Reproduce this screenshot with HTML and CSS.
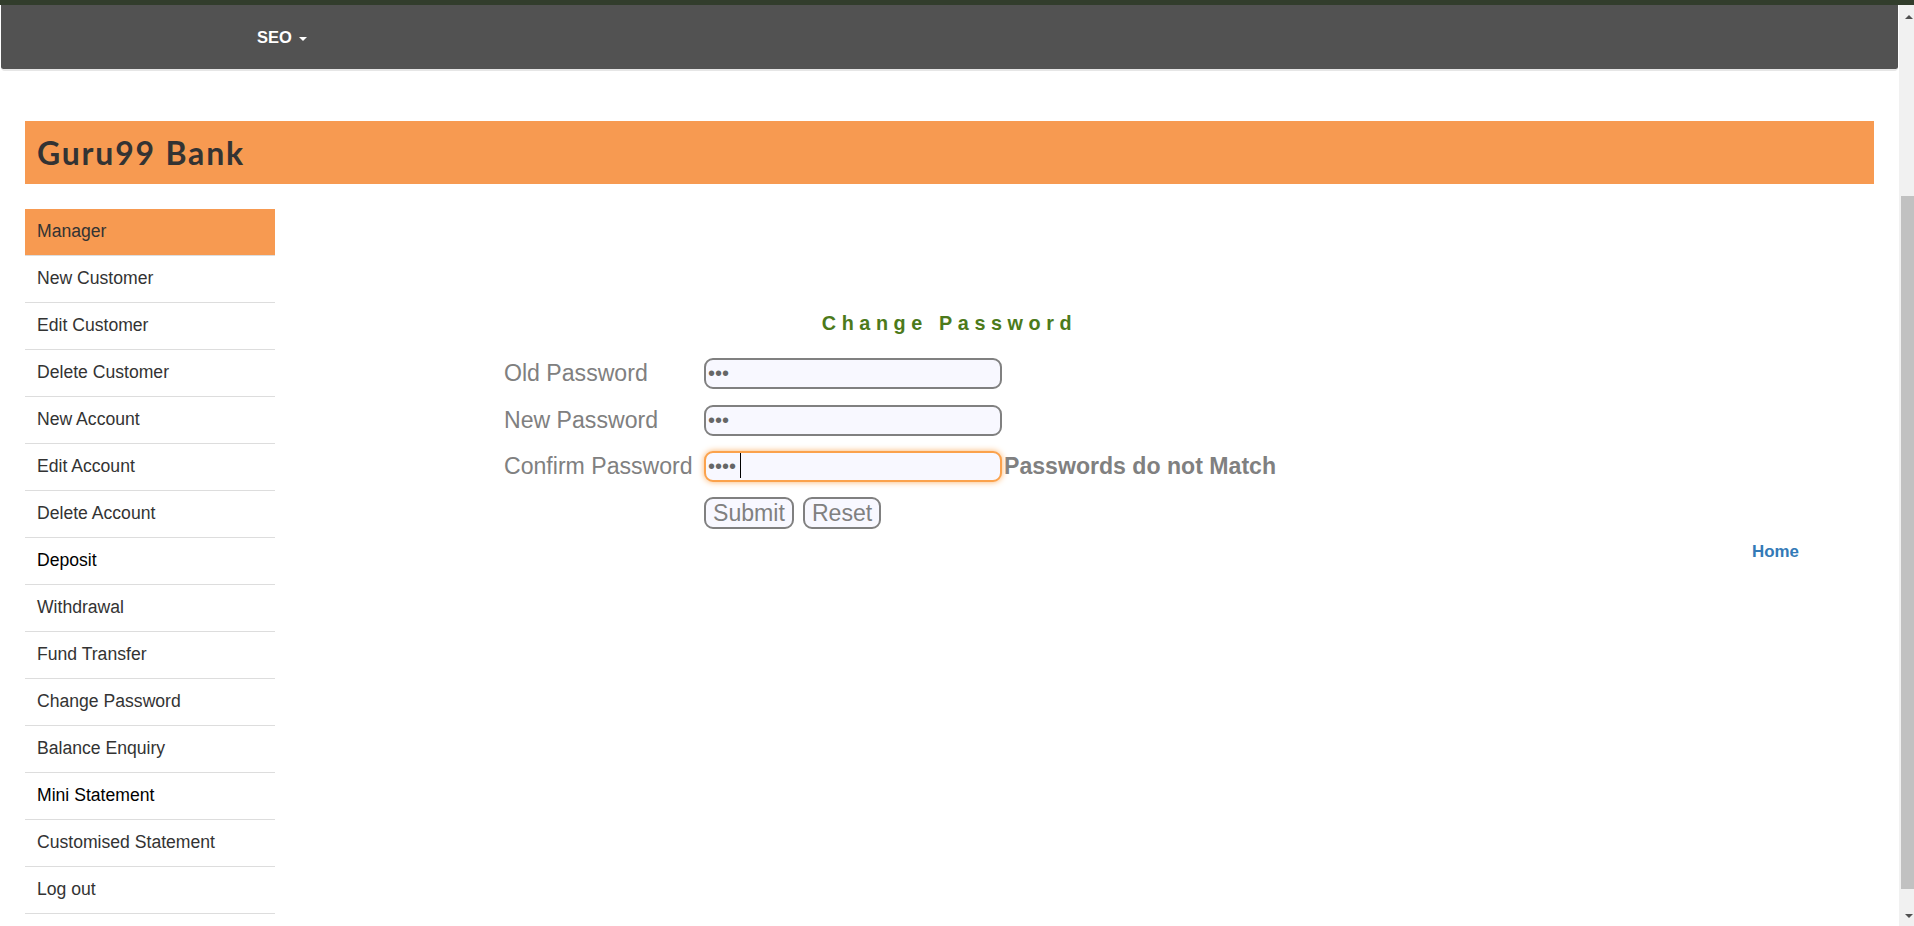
FILE: index.html
```html
<!DOCTYPE html>
<html lang="en">
<head>
<meta charset="utf-8">
<title>Guru99 Bank - Change Password</title>
<link rel="stylesheet" href="styles.css">
</head>
<body>
<div class="topband"></div>
<div class="window">
  <div class="page">
    <nav class="navbar">
      <a class="nav-item" href="#">SEO <span class="nav-caret"></span></a>
    </nav>
    <div class="container">
      <header class="brand">Guru99 Bank</header>
      <div class="layout">
        <ul class="sidebar">
          <li class="menu-head">Manager</li>
          <li><a href="#">New Customer</a></li>
          <li><a href="#">Edit Customer</a></li>
          <li><a href="#">Delete Customer</a></li>
          <li><a href="#">New Account</a></li>
          <li><a href="#">Edit Account</a></li>
          <li><a href="#">Delete Account</a></li>
          <li><a class="dark" href="#">Deposit</a></li>
          <li><a href="#">Withdrawal</a></li>
          <li><a href="#">Fund Transfer</a></li>
          <li><a href="#">Change Password</a></li>
          <li><a href="#">Balance Enquiry</a></li>
          <li><a class="dark" href="#">Mini Statement</a></li>
          <li><a href="#">Customised Statement</a></li>
          <li><a href="#">Log out</a></li>
        </ul>
        <main class="content">
          <form class="pw-form">
            <h3 class="heading">Change Password</h3>
            <div class="grid">
              <label class="lbl">Old Password</label>
              <div class="field"><input class="pw" type="password" value="abc"></div>
              <label class="lbl">New Password</label>
              <div class="field"><input class="pw" type="password" value="abc"></div>
              <label class="lbl">Confirm Password</label>
              <div class="field">
                <span class="input-wrap"><input class="pw focused" type="password" value="abcd"><span class="caret"></span></span><span class="mismatch">Passwords do not Match</span>
              </div>
              <span class="lbl"></span>
              <div class="buttons">
                <button class="btn" type="button">Submit</button>
                <button class="btn" type="button">Reset</button>
              </div>
            </div>
          </form>
          <div class="home-row"><a class="home" href="#">Home</a></div>
        </main>
      </div>
    </div>
  </div>
  <div class="scrollbar">
    <div class="sb-btn sb-up"><span class="arrow-up"></span></div>
    <div class="sb-track"><div class="sb-thumb"></div></div>
    <div class="sb-btn sb-down"><span class="arrow-down"></span></div>
  </div>
</div>
</body>
</html>
```

FILE: styles.css
```css
* { box-sizing: border-box; }

html, body {
  margin: 0;
  padding: 0;
  height: 926px;
  overflow: hidden;
  background: #ffffff;
  font-family: "Liberation Sans", Arial, sans-serif;
}

.topband {
  height: 5px;
  background: #323d2c;
}

.window {
  display: flex;
  height: 921px;
}

.page {
  flex: 1;
  min-width: 0;
  overflow: hidden;
}

/* navbar */
.navbar {
  margin: 0 1px;
  height: 66px;
  background: #525252;
  border-bottom: 2px solid #e6e6e6;
  border-radius: 0 0 4px 4px;
  display: flex;
  align-items: center;
  padding-left: 256px;
  padding-top: 1px;
}

.nav-item {
  color: #ffffff;
  font-weight: bold;
  font-size: 16.5px;
  text-decoration: none;
  display: flex;
  align-items: center;
}

.nav-caret {
  display: inline-block;
  width: 0;
  height: 0;
  margin-left: 7px;
  margin-top: 2px;
  border-left: 4px solid transparent;
  border-right: 4px solid transparent;
  border-top: 4px solid #ffffff;
}

/* container */
.container {
  padding: 50px 25px 0 25px;
}

.brand {
  height: 63px;
  background: #f79a51;
  color: #333333;
  font-family: "Lato", "Open Sans", sans-serif;
  font-weight: 700;
  font-size: 32px;
  letter-spacing: 1.8px;
  display: flex;
  align-items: center;
  padding-left: 12px;
  padding-bottom: 1px;
}

.layout {
  display: flex;
  margin-top: 25px;
}

/* sidebar */
.sidebar {
  list-style: none;
  margin: 0;
  padding: 0;
  width: 250px;
  flex: none;
}

.sidebar li {
  border-bottom: 1px solid #dddddd;
  font-size: 17.6px;
  line-height: 25px;
}

.sidebar li a,
.menu-head {
  display: block;
  padding: 10px 12px 11px;
  color: #333333;
  text-decoration: none;
}

.sidebar li a.dark {
  color: #000000;
}

.menu-head {
  background: #f79a51;
}

/* content */
.content {
  flex: 1;
  min-width: 0;
}

.pw-form {
  margin-left: 228px;
  width: 893px;
  padding-top: 102px;
}

.heading {
  margin: 0;
  text-align: center;
  font-size: 19.8px;
  line-height: 24px;
  font-weight: bold;
  letter-spacing: 5.6px;
  color: #4c7a1b;
}

.grid {
  display: grid;
  grid-template-columns: 201px 1fr;
  grid-auto-rows: 31px;
  row-gap: 15.5px;
  align-items: center;
  margin-top: 23px;
}

.lbl {
  font-size: 23.1px;
  color: #808080;
  white-space: nowrap;
  margin-left: 1px;
}

.field {
  display: flex;
  align-items: center;
}

.input-wrap {
  position: relative;
  display: inline-block;
}

.pw {
  width: 298px;
  height: 31px;
  border: 2px solid #808080;
  border-radius: 9px;
  background: #f8f8ff;
  padding: 0 2px;
  font-family: "Liberation Sans", Arial, sans-serif;
  font-size: 20px;
  color: #666666;
  outline: none;
}

.pw.focused {
  border-color: #fba24c;
  box-shadow: 0 0 6px #fbb36b;
}

.caret {
  position: absolute;
  left: 36px;
  top: 2px;
  width: 1px;
  height: 25px;
  background: #000000;
}

.mismatch {
  margin-left: 2px;
  font-size: 23.1px;
  font-weight: bold;
  color: #808080;
  white-space: nowrap;
}

.buttons {
  display: flex;
  gap: 9px;
  align-self: start;
  margin-top: -1px;
}

.btn {
  height: 32px;
  padding: 0 7px;
  border: 2px solid #808080;
  border-radius: 9px;
  background: #f8f8ff;
  color: #808080;
  font-family: "Liberation Sans", Arial, sans-serif;
  font-size: 23.1px;
  line-height: 26px;
}

.home-row {
  display: flex;
  justify-content: flex-end;
  padding-right: 75px;
  margin-top: 13px;
}

.home {
  color: #337ab7;
  font-weight: bold;
  font-size: 16.9px;
  line-height: 20px;
  text-decoration: none;
}

/* fake scrollbar */
.scrollbar {
  width: 15px;
  flex: none;
  background: #f1f1f1;
  display: flex;
  flex-direction: column;
}

.sb-btn {
  display: flex;
  align-items: center;
  padding-left: 6px;
}

.sb-up { height: 24px; }
.sb-down { height: 21px; }

.sb-track {
  flex: 1;
  padding-top: 167px;
  padding-bottom: 16px;
}

.sb-thumb {
  margin-left: 2px;
  height: 693px;
  background: #c1c1c1;
}

.arrow-up {
  width: 0;
  height: 0;
  border-left: 4.5px solid transparent;
  border-right: 4.5px solid transparent;
  border-bottom: 4.5px solid #505050;
}

.arrow-down {
  width: 0;
  height: 0;
  border-left: 4.5px solid transparent;
  border-right: 4.5px solid transparent;
  border-top: 4.5px solid #505050;
}
```
